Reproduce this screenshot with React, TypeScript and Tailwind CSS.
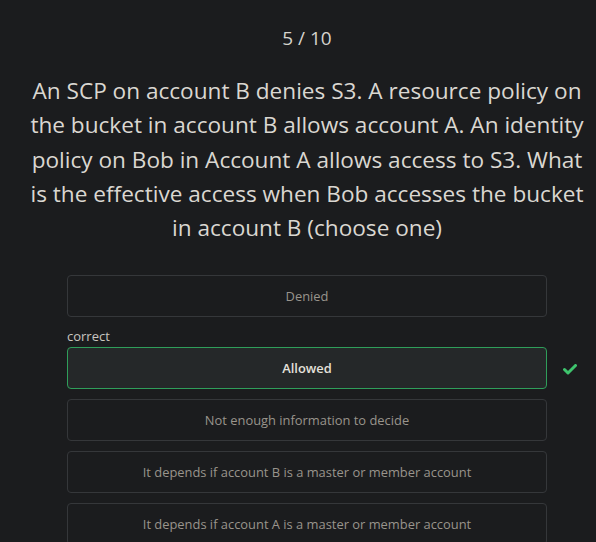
import React from "react";

const options = [
  { label: "Denied" },
  { label: "Allowed", correct: true },
  { label: "Not enough information to decide" },
  { label: "It depends if account B is a master or member account" },
  { label: "It depends if account A is a master or member account" },
];

const Check = () => (
  <svg width="14" height="11" viewBox="0 0 14 11" className="text-[#3ec46d]">
    <path d="M1.5 5.5 L5 9 L12.5 1.5" fill="none" stroke="currentColor" strokeWidth="3" strokeLinecap="round" strokeLinejoin="round" />
  </svg>
);

export default function App() {
  return (
    <div className="min-h-[542px] w-full bg-[#1b1c1e] font-['Open_Sans',sans-serif] overflow-hidden">
      <div className="flex flex-col items-center pt-[26px] pl-[18px]">
        <div className="text-[19px] leading-[24px] text-[#d6d3cd]">5 / 10</div>
        <p className="mt-[24px] w-[570px] text-center text-[22.6px] leading-[34.3px] text-[#dad7d1]">
          An SCP on account B denies S3. A resource policy on the bucket in account B allows account A. An identity
          policy on Bob in Account A allows access to S3. What is the effective access when Bob accesses the bucket in
          account B (choose one)
        </p>
        <div className="mt-[30px] flex w-[480px] flex-col gap-[10px]">
          {options.map((o) => (
            <div key={o.label} className="flex flex-col">
              {o.correct && <div className="mt-[1px] mb-[3px] text-[13px] leading-[16px] text-[#c9c6c0]">correct</div>}
              <div className="relative">
                <div
                  className={
                    o.correct
                      ? "flex h-[42px] items-center justify-center rounded-[4px] border border-[#2f9e5a] bg-[#252829] text-[12.9px] font-semibold text-[#e4e1db]"
                      : "flex h-[42px] items-center justify-center rounded-[4px] border border-[#35373a] text-[12.9px] text-[#99948c]"
                  }
                >
                  {o.label}
                </div>
                {o.correct && (
                  <div className="absolute left-[496px] top-[17px]">
                    <Check />
                  </div>
                )}
              </div>
            </div>
          ))}
        </div>
      </div>
    </div>
  );
}
